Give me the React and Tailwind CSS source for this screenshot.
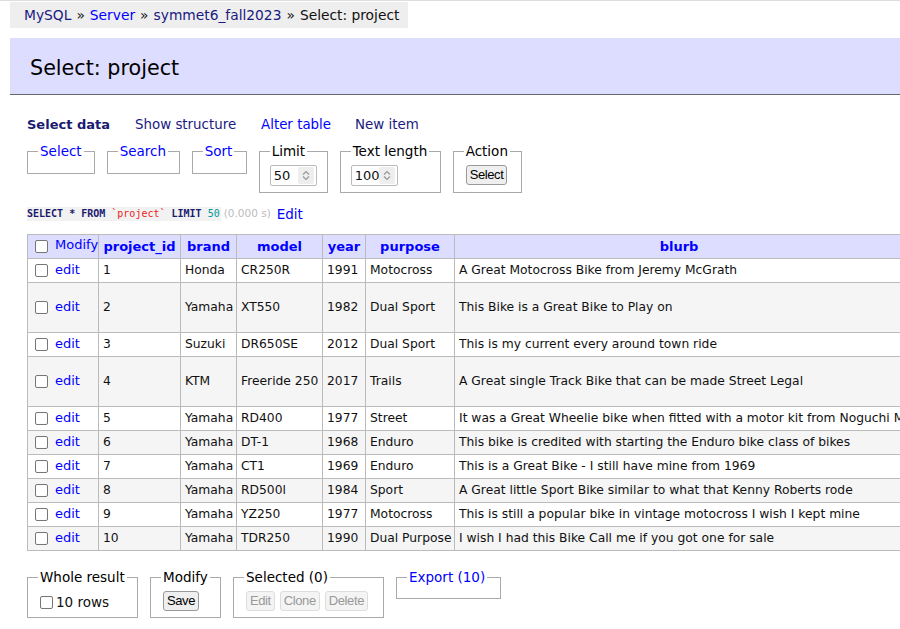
import React from "react";

const rows = [
  { id: 1, brand: "Honda", model: "CR250R", year: 1991, purpose: "Motocross", blurb: "A Great Motocross Bike from Jeremy McGrath" },
  { id: 2, brand: "Yamaha", model: "XT550", year: 1982, purpose: "Dual Sport", blurb: "This Bike is a Great Bike to Play on", tall: true },
  { id: 3, brand: "Suzuki", model: "DR650SE", year: 2012, purpose: "Dual Sport", blurb: "This is my current every around town ride" },
  { id: 4, brand: "KTM", model: "Freeride 250", year: 2017, purpose: "Trails", blurb: "A Great single Track Bike that can be made Street Legal", tall: true },
  { id: 5, brand: "Yamaha", model: "RD400", year: 1977, purpose: "Street", blurb: "It was a Great Wheelie bike when fitted with a motor kit from Noguchi Motors" },
  { id: 6, brand: "Yamaha", model: "DT-1", year: 1968, purpose: "Enduro", blurb: "This bike is credited with starting the Enduro bike class of bikes" },
  { id: 7, brand: "Yamaha", model: "CT1", year: 1969, purpose: "Enduro", blurb: "This is a Great Bike - I still have mine from 1969" },
  { id: 8, brand: "Yamaha", model: "RD500l", year: 1984, purpose: "Sport", blurb: "A Great little Sport Bike similar to what that Kenny Roberts rode" },
  { id: 9, brand: "Yamaha", model: "YZ250", year: 1977, purpose: "Motocross", blurb: "This is still a popular bike in vintage motocross I wish I kept mine" },
  { id: 10, brand: "Yamaha", model: "TDR250", year: 1990, purpose: "Dual Purpose", blurb: "I wish I had this Bike Call me if you got one for sale" },
];

const Check = () => (
  <span className="inline-block shrink-0 w-[13px] h-[13px] border border-[#767676] rounded-[2px] bg-white align-middle" />
);

const Spinner = () => (
  <span className="ml-auto w-[16px] h-[17px] mr-[2px] bg-[#eee] rounded-[2px] flex items-center justify-center">
    <svg width="8" height="11" viewBox="0 0 8 11" fill="none" stroke="#999" strokeWidth="1.2">
      <path d="M1 4.5 L4 1.5 L7 4.5" />
      <path d="M1 6.5 L4 9.5 L7 6.5" />
    </svg>
  </span>
);

const NumInput = ({ value, w }) => (
  <div className={`flex items-center h-[21px] border border-[#bbb] rounded-[2px] bg-white pl-[3px] text-[13px] ${w}`}>
    <span>{value}</span>
    <Spinner />
  </div>
);

const Btn = ({ children, disabled }) => (
  <span
    className={`inline-flex items-center h-[20px] px-[3px] rounded-[3px] border text-[13px] font-['Liberation_Sans',sans-serif] tracking-[-0.4px] ${
      disabled ? "border-[#ddd] bg-[#f4f4f4] text-[#999]" : "border-[#999] bg-[#efefef] text-black"
    }`}
  >
    {children}
  </span>
);

function Box({ legend, link, className, children }) {
  return (
    <fieldset className={`border border-[#aaa] px-[10px] ${className}`}>
      <legend className={`px-[2px] text-[13.5px] leading-[16px] ${link ? "text-[#00f]" : "text-black"}`}>
        {legend}
      </legend>
      {children}
    </fieldset>
  );
}

export default function App() {
  return (
    <div className="w-[900px] h-[629px] overflow-hidden bg-white text-[#111] font-['DejaVu_Sans',Verdana,sans-serif] text-[13px] border-t border-[#ddd]">
      <div className="ml-[10px] mt-[1px] w-[398px] h-[26px] bg-[#eee] pl-[14px] flex items-center text-[13.8px] whitespace-nowrap">
        <span className="text-[#1a1a80]">MySQL</span>
        <span className="mx-[5px]">»</span>
        <span className="text-[#00f]">Server</span>
        <span className="mx-[5px]">»</span>
        <span className="text-[#1a1a80]">symmet6_fall2023</span>
        <span className="mx-[5px]">»</span>
        <span>Select: project</span>
      </div>

      <div className="ml-[10px] mt-[10px] h-[57px] bg-[#ddf] border-b border-[#666] pl-[20px] pt-[5px] flex items-center text-[20.7px] text-black">
        Select: project
      </div>

      <div className="pl-[27px]">
        <div className="flex items-center mt-[21px] h-[18px] text-[13.4px] whitespace-nowrap">
          <span className="w-[108px] font-bold text-[13px] text-[#1a1a70]">Select data</span>
          <span className="w-[126px] text-[#1a1a80]">Show structure</span>
          <span className="w-[94px] text-[#00f]">Alter table</span>
          <span className="text-[#1a1a80]">New item</span>
        </div>

        <div className="flex items-start gap-[12px] mt-[9px]">
          <Box legend="Select" link className="w-[67px] h-[31px]" />
          <Box legend="Search" link className="w-[73px] h-[31px]" />
          <Box legend="Sort" link className="w-[55px] h-[31px]" />
          <Box legend="Limit" className="w-[69px] h-[50px]">
            <div className="mt-[6px]">
              <NumInput value="50" w="w-[47px]" />
            </div>
          </Box>
          <Box legend="Text length" className="w-[101px] h-[50px]">
            <div className="mt-[6px]">
              <NumInput value="100" w="w-[47px]" />
            </div>
          </Box>
          <Box legend="Action" className="w-[69px] h-[50px]">
            <div className="mt-[6px] ml-[2px]">
              <Btn>Select</Btn>
            </div>
          </Box>
        </div>

        <div className="flex items-center mt-[13px] h-[16px] whitespace-nowrap">
          <code className="bg-[#f2f2f2] font-['DejaVu_Sans_Mono',monospace] text-[10px] leading-[14px] pr-[1px]">
            <span className="font-bold text-[#1a1a6e]">SELECT * FROM </span>
            <span className="text-[#e22]">`project`</span>
            <span className="font-bold text-[#1a1a6e]"> LIMIT </span>
            <span className="text-[#099]">50</span>
          </code>
          <span className="ml-[3px] text-[10.5px] text-[#bbb]">(0.000 s)</span>
          <span className="ml-[6px] text-[#00f] text-[13.5px]">Edit</span>
        </div>

        <table className="mt-[12px] table-fixed border-collapse w-[876px] text-[12.3px]">
          <colgroup>
            <col className="w-[71px]" />
            <col className="w-[82px]" />
            <col className="w-[56px]" />
            <col className="w-[86px]" />
            <col className="w-[43px]" />
            <col className="w-[89px]" />
            <col className="w-[449px]" />
          </colgroup>
          <thead>
            <tr className="h-[24px] bg-[#ddf] text-[#00f] text-[13px]">
              <td className="border border-[#bbb] px-[7px] whitespace-nowrap">
                <span className="flex items-center gap-[7px]">
                  <Check />
                  <span className="-mt-[3px]">Modify</span>
                </span>
              </td>
              {["project_id", "brand", "model", "year", "purpose", "blurb"].map((h) => (
                <th key={h} className="border border-[#bbb] px-[4px] font-bold text-center whitespace-nowrap">
                  {h}
                </th>
              ))}
            </tr>
          </thead>
          <tbody>
            {rows.map((r, i) => (
              <tr
                key={r.id}
                className={`${r.tall ? "h-[50px]" : "h-[24px]"} ${i % 2 ? "bg-[#f5f5f5]" : "bg-white"}`}
              >
                <td className="border border-[#bbb] px-[7px] whitespace-nowrap">
                  <span className="flex items-center gap-[7px]">
                    <Check />
                    <span className="text-[#00f] text-[13px] -mt-[2px]">edit</span>
                  </span>
                </td>
                <td className="border border-[#bbb] px-[4px] whitespace-nowrap">{r.id}</td>
                <td className="border border-[#bbb] px-[4px] whitespace-nowrap">{r.brand}</td>
                <td className="border border-[#bbb] px-[4px] whitespace-nowrap">{r.model}</td>
                <td className="border border-[#bbb] px-[4px] whitespace-nowrap">{r.year}</td>
                <td className="border border-[#bbb] px-[4px] whitespace-nowrap">{r.purpose}</td>
                <td className="border border-[#bbb] px-[4px] whitespace-nowrap overflow-visible">{r.blurb}</td>
              </tr>
            ))}
          </tbody>
        </table>

        <div className="flex items-start gap-[12px] mt-[18px]">
          <Box legend="Whole result" className="w-[111px] h-[49px]">
            <div className="flex items-center gap-[3px] mt-[7px] ml-[2px] text-[13.5px]">
              <Check />
              <span>10 rows</span>
            </div>
          </Box>
          <Box legend="Modify" className="w-[71px] h-[49px]">
            <div className="mt-[6px] ml-[2px]">
              <Btn>Save</Btn>
            </div>
          </Box>
          <Box legend="Selected (0)" className="w-[151px] h-[49px]">
            <div className="flex gap-[5px] mt-[6px] ml-[2px]">
              <Btn disabled>Edit</Btn>
              <Btn disabled>Clone</Btn>
              <Btn disabled>Delete</Btn>
            </div>
          </Box>
          <Box legend="Export (10)" link className="w-[105px] h-[30px]" />
        </div>
      </div>
    </div>
  );
}
